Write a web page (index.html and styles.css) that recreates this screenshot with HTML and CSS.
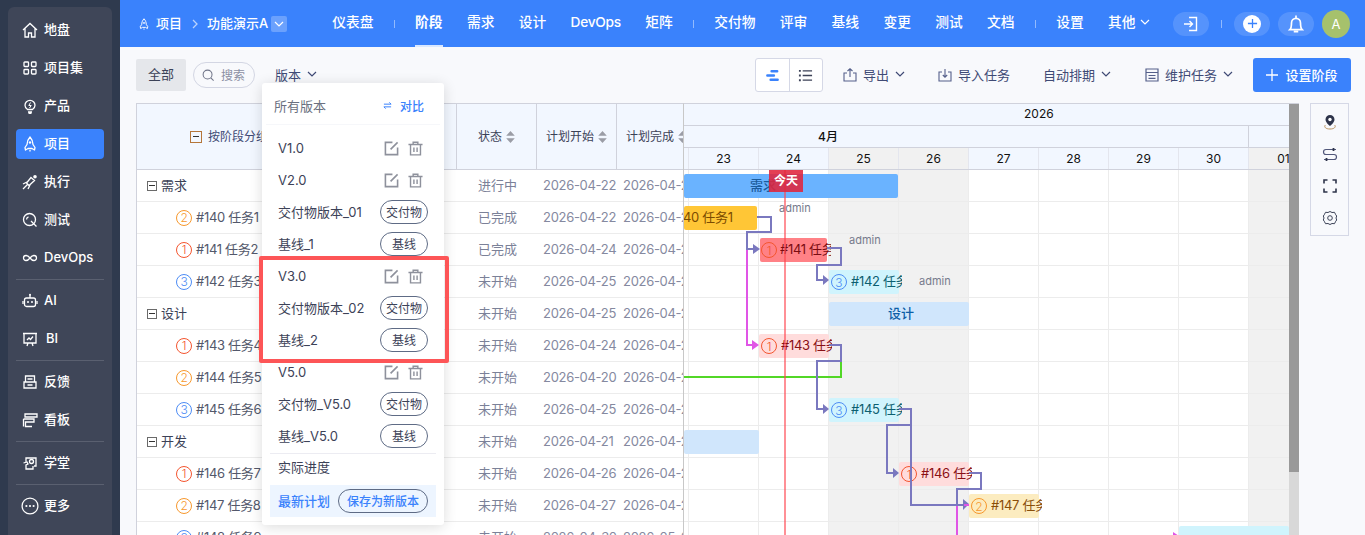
FILE: index.html
```html
<!DOCTYPE html>
<html>
<head>
    <meta charset="utf-8">
    <title>阶段</title>
    <link rel="stylesheet" href="styles.css">
</head>
<body>
    <svg class="defs" width="0" height="0">
        <symbol id="i-edit" viewBox="0 0 16 16"><path d="M9 1.500H1.500v13h13V7M7 9l7.500-7.500" fill="none" stroke="currentColor" stroke-width="1.700"/></symbol>
        <symbol id="i-trash" viewBox="0 0 16 16"><path d="M.500 3.800h15M5.500 3.800V1.300h5v2.500M2.700 3.800v11h10.600v-11M6.300 7v4.800M9.700 7v4.800" fill="none" stroke="currentColor" stroke-width="1.500"/></symbol>
        <symbol id="i-rocket" viewBox="0 0 16 16"><path d="M8 1C5.800 3.500 5 6 5 8.500l-2 3 .5 2.500 2.500-1.500h4l2.500 1.500.5-2.500-2-3C11 6 10.200 3.500 8 1zM8 14v1.500" fill="none" stroke="currentColor" stroke-width="1.300" stroke-linejoin="round"/><circle cx="8" cy="6.500" r="1.200" fill="currentColor"/></symbol>
        <symbol id="i-chev" viewBox="0 0 10 10"><path d="M1 3l4 4 4-4" fill="none" stroke="currentColor" stroke-width="1.200"/></symbol>
        <symbol id="i-sort" viewBox="0 0 10 14"><path d="M5 0l5 5.500H0zM5 14L0 8.500h10z" fill="currentColor"/></symbol>
    </svg>

    <div class="app">
        <aside class="sidebar">
            <nav class="side-panel">
                <a class="side-item"><svg class="side-ico" viewBox="0 0 16 16"><path d="M1 8l7-6.500L15 8M3 6.500V15h3.500v-4h3v4H13V6.500" fill="none" stroke="currentColor" stroke-width="1.300"/></svg>地盘</a>
                <a class="side-item"><svg class="side-ico" viewBox="0 0 16 16"><g fill="none" stroke="currentColor" stroke-width="1.300"><rect x="2" y="2" width="4.500" height="4.500" rx=".8"/><rect x="9.500" y="2" width="4.500" height="4.500" rx=".8"/><rect x="2" y="9.500" width="4.500" height="4.500" rx=".8"/><rect x="9.500" y="9.500" width="4.500" height="4.500" rx=".8"/></g></svg>项目集</a>
                <a class="side-item"><svg class="side-ico" viewBox="0 0 16 16"><path d="M5.500 11.500C3.500 10.300 3 8.700 3 7.300a5 5 0 0 1 10 0c0 1.400-.5 3-2.500 4.200zM6 14h4M6.500 15.500h3" fill="none" stroke="currentColor" stroke-width="1.300"/><path d="M8.500 4.500L6.800 7.500h2.400L7.500 10" fill="none" stroke="currentColor"/></svg>产品</a>
                <a class="side-item side-active"><svg class="side-ico"><use href="#i-rocket"/></svg>项目</a>
                <a class="side-item"><svg class="side-ico" viewBox="0 0 16 16"><path d="M9 3.500l3.500 3L7 11.500 4.500 9zM1 15l4.500-4.500M1 10l4-2M6 15l2-4" fill="none" stroke="currentColor" stroke-width="1.300"/><circle cx="13" cy="2.800" r="1.800" fill="currentColor"/></svg>执行</a>
                <a class="side-item"><svg class="side-ico" viewBox="0 0 16 16"><circle cx="7.500" cy="7.500" r="6" fill="none" stroke="currentColor" stroke-width="1.300"/><path d="M9 9l5.500 5.500M4.500 7.500a3 3 0 0 1 2-2.700" fill="none" stroke="currentColor" stroke-width="1.300"/></svg>测试</a>
                <a class="side-item side-latin"><svg class="side-ico" viewBox="0 0 16 16"><path d="M8 8C6.500 6 5.500 5.500 4 5.500a2.500 2.500 0 0 0 0 5c1.500 0 2.500-.5 4-2.500s2.500-2.500 4-2.500a2.500 2.500 0 0 1 0 5c-1.500 0-2.500-.5-4-2.500z" fill="none" stroke="currentColor" stroke-width="1.300"/></svg>DevOps</a>
                <div class="side-divider"></div>
                <a class="side-item side-latin"><svg class="side-ico" viewBox="0 0 16 16"><rect x="2.500" y="5" width="11" height="8.500" rx="2" fill="none" stroke="currentColor" stroke-width="1.300"/><path d="M8 2v3M1 8v3M15 8v3" stroke="currentColor" stroke-width="1.300"/><circle cx="8" cy="1.800" r="1" fill="currentColor"/><circle cx="6" cy="9" r="1" fill="currentColor"/><circle cx="10" cy="9" r="1" fill="currentColor"/></svg>AI</a>
                <a class="side-item side-latin"><svg class="side-ico" viewBox="0 0 16 16"><path d="M2 2.500h12V12H2zM1 2.500h14M6 12l-1 3M10 12l1 3M5 9l2-2 1.500 1.500L11 5.500" fill="none" stroke="currentColor" stroke-width="1.300"/></svg><span class="side-bi">BI</span></a>
                <div class="side-divider"></div>
                <a class="side-item"><svg class="side-ico" viewBox="0 0 16 16"><path d="M3.500 8V2h9v6M2 8h12v6H2zM5.500 5h5M5.500 11h5" fill="none" stroke="currentColor" stroke-width="1.300"/></svg>反馈</a>
                <a class="side-item"><svg class="side-ico" viewBox="0 0 16 16"><path d="M3 2h12v3H3zM1.500 7H12v3H3.500v4.500H10M3 2v3M1.500 7v7.500" fill="none" stroke="currentColor" stroke-width="1.300"/></svg>看板</a>
                <div class="side-divider"></div>
                <a class="side-item"><svg class="side-ico" viewBox="0 0 16 16"><path d="M4 7.500V3h10v8h-2M1.500 8l3.500-1 1 2-2 1v4h7v-3" fill="none" stroke="currentColor" stroke-width="1.300"/><circle cx="9.500" cy="6.500" r="2" fill="none" stroke="currentColor" stroke-width="1.300"/></svg>学堂</a>
                <div class="side-divider"></div>
                <a class="side-item"><svg class="side-ico side-ico-lg" viewBox="0 0 20 20"><circle cx="10" cy="10" r="8.800" fill="none" stroke="currentColor" stroke-width="1.400"/><circle cx="6" cy="10" r="1.200" fill="currentColor"/><circle cx="10" cy="10" r="1.200" fill="currentColor"/><circle cx="14" cy="10" r="1.200" fill="currentColor"/></svg>更多</a>
            </nav>
        </aside>

        <main class="main">
            <header class="topbar">
                <div class="crumbs">
                    <svg class="crumb-ico"><use href="#i-rocket"/></svg>
                    <span>项目</span>
                    <svg class="crumb-sep" viewBox="0 0 10 10"><path d="M3 1l4 4-4 4" fill="none" stroke="currentColor" stroke-width="1.300"/></svg>
                    <span>功能演示A</span>
                    <span class="crumb-drop"><svg class="chev"><use href="#i-chev"/></svg></span>
                </div>
                <nav class="top-nav">
                    <a>仪表盘</a>
                    <i class="nav-sep"></i>
                    <a class="nav-active">阶段</a>
                    <a>需求</a>
                    <a>设计</a>
                    <a class="nav-latin">DevOps</a>
                    <a>矩阵</a>
                    <i class="nav-sep"></i>
                    <a>交付物</a>
                    <a>评审</a>
                    <a>基线</a>
                    <a>变更</a>
                    <a>测试</a>
                    <a>文档</a>
                    <i class="nav-sep"></i>
                    <a>设置</a>
                    <a class="nav-more">其他<svg class="chev"><use href="#i-chev"/></svg></a>
                </nav>
                <div class="top-actions">
                    <span class="top-btn"><svg viewBox="0 0 16 16"><path d="M6 1.500h7.500v13H6M1 8h8M6.500 5l3 3-3 3" fill="none" stroke="currentColor" stroke-width="1.400"/></svg></span>
                    <i class="nav-sep"></i>
                    <span class="top-btn top-btn-add"><span class="add-circle"><svg viewBox="0 0 12 12"><path d="M6 1v10M1 6h10" stroke="#3a82fc" stroke-width="1.400"/></svg></span></span>
                    <span class="top-btn top-btn-bell"><svg viewBox="0 0 16 16"><path d="M2.500 13c1-1 1.500-2 1.500-6a4 4 0 0 1 8 0c0 4 .5 5 1.500 6zM6 14.800h4M8 .5v2.500" fill="none" stroke="currentColor" stroke-width="1.500"/></svg></span>
                    <span class="avatar">A</span>
                </div>
            </header>

            <section class="toolbar">
                <button class="tab-all">全部</button>
                <span class="search"><svg viewBox="0 0 14 14"><circle cx="6" cy="6" r="4.800" fill="none" stroke="currentColor" stroke-width="1.100"/><path d="M9.500 9.500l3 3" stroke="currentColor" stroke-width="1.100"/></svg>搜索</span>
                <span class="version-btn">版本<svg class="chev"><use href="#i-chev"/></svg></span>
                <div class="tool-right">
                    <div class="view-switch">
                        <span><svg viewBox="0 0 16 16"><g fill="none" stroke="#3a82fc" stroke-width="2.600" stroke-linecap="round"><path d="M7 3.500h6M2.500 8h7M6 12.500h7.500"/></g></svg></span>
                        <span><svg viewBox="0 0 16 16"><g stroke="#3c4257" stroke-width="1.400"><path d="M5 3h10M5 8h10M5 13h10"/><path d="M1 3h2M1 8h2M1 13h2" stroke-width="2"/></g></svg></span>
                    </div>
                    <span class="tool-item tool-export"><svg class="tool-ico" viewBox="0 0 14 14"><path d="M4 5H1v8h12V5h-3M7 9V1M4.500 3L7 .8 9.500 3" fill="none" stroke="currentColor" stroke-width="1.100"/></svg>导出<svg class="chev"><use href="#i-chev"/></svg></span>
                    <span class="tool-item tool-import"><svg class="tool-ico" viewBox="0 0 14 14"><path d="M4 4H1v9h12V4h-3M7 1v8M4.800 7L7 9.200 9.200 7" fill="none" stroke="currentColor" stroke-width="1.100"/></svg>导入任务</span>
                    <span class="tool-item tool-auto">自动排期<svg class="chev"><use href="#i-chev"/></svg></span>
                    <span class="tool-item tool-maint"><svg class="tool-ico" viewBox="0 0 14 14"><path d="M1 1h12v12H1zM1 4.500h12M3.500 7.500h7M3.500 10.300h7" fill="none" stroke="currentColor" stroke-width="1.200"/></svg>维护任务<svg class="chev"><use href="#i-chev"/></svg></span>
                    <button class="primary-btn"><svg viewBox="0 0 12 12"><path d="M6 0v12M0 6h12" stroke="#fff" stroke-width="1.300"/></svg>设置阶段</button>
                </div>
            </section>

            <section class="board">
                <div class="task-table">
                    <div class="thead">
                        <div class="th th-name"><span class="collapse collapse-head"></span>按阶段分组</div>
                        <div class="th">状态<svg class="sort"><use href="#i-sort"/></svg></div>
                        <div class="th">计划开始<svg class="sort"><use href="#i-sort"/></svg></div>
                        <div class="th th-last">计划完成<svg class="sort"><use href="#i-sort"/></svg></div>
                    </div>
                    <div class="tr"><div class="td-name"><span class="collapse"></span>需求</div><div class="td-status">进行中</div><div class="td-date">2026-04-22</div><div class="td-date">2026-04-24</div></div>
                    <div class="tr"><div class="td-name td-task"><span class="level level-2">2</span>#140 任务1</div><div class="td-status">已完成</div><div class="td-date">2026-04-22</div><div class="td-date">2026-04-23</div></div>
                    <div class="tr"><div class="td-name td-task"><span class="level level-1">1</span>#141 任务2</div><div class="td-status">已完成</div><div class="td-date">2026-04-24</div><div class="td-date">2026-04-24</div></div>
                    <div class="tr"><div class="td-name td-task"><span class="level level-3">3</span>#142 任务3</div><div class="td-status">未开始</div><div class="td-date">2026-04-25</div><div class="td-date">2026-04-25</div></div>
                    <div class="tr"><div class="td-name"><span class="collapse"></span>设计</div><div class="td-status">未开始</div><div class="td-date">2026-04-25</div><div class="td-date">2026-04-26</div></div>
                    <div class="tr"><div class="td-name td-task"><span class="level level-1">1</span>#143 任务4</div><div class="td-status">未开始</div><div class="td-date">2026-04-24</div><div class="td-date">2026-04-24</div></div>
                    <div class="tr"><div class="td-name td-task"><span class="level level-2">2</span>#144 任务5</div><div class="td-status">未开始</div><div class="td-date">2026-04-20</div><div class="td-date">2026-04-21</div></div>
                    <div class="tr"><div class="td-name td-task"><span class="level level-3">3</span>#145 任务6</div><div class="td-status">未开始</div><div class="td-date">2026-04-25</div><div class="td-date">2026-04-25</div></div>
                    <div class="tr"><div class="td-name"><span class="collapse"></span>开发</div><div class="td-status">未开始</div><div class="td-date">2026-04-21</div><div class="td-date">2026-04-23</div></div>
                    <div class="tr"><div class="td-name td-task"><span class="level level-1">1</span>#146 任务7</div><div class="td-status">未开始</div><div class="td-date">2026-04-26</div><div class="td-date">2026-04-26</div></div>
                    <div class="tr"><div class="td-name td-task"><span class="level level-2">2</span>#147 任务8</div><div class="td-status">未开始</div><div class="td-date">2026-04-27</div><div class="td-date">2026-04-27</div></div>
                    <div class="tr"><div class="td-name td-task"><span class="level level-3">3</span>#148 任务9</div><div class="td-status">未开始</div><div class="td-date">2026-04-30</div><div class="td-date">2026-05-01</div></div>
                </div>

                <div class="gantt">
                    <div class="gantt-inner">
                        <div class="g-year">2026</div>
                        <div class="g-month"><span class="g-month-apr">4月</span><span class="g-month-may"></span></div>
                        <div class="g-days">
                            <span class="g-day g-day-first"></span>
                            <span class="g-day">23</span>
                            <span class="g-day">24</span>
                            <span class="g-day g-off">25</span>
                            <span class="g-day g-off">26</span>
                            <span class="g-day">27</span>
                            <span class="g-day">28</span>
                            <span class="g-day">29</span>
                            <span class="g-day">30</span>
                            <span class="g-day g-off">01</span>
                        </div>
                        <div class="g-body">
                            <div class="g-cols">
                                <span class="g-col g-col-first"></span>
                                <span class="g-col"></span>
                                <span class="g-col"></span>
                                <span class="g-col g-off"></span>
                                <span class="g-col g-off"></span>
                                <span class="g-col"></span>
                                <span class="g-col"></span>
                                <span class="g-col"></span>
                                <span class="g-col"></span>
                                <span class="g-col g-off"></span>
                            </div>

                            <div class="bar bar-req">需求</div>
                            <div class="bar bar-t140">40 任务1</div>
                            <div class="bar-task bar-t141 task-hot"><span class="level level-1">1</span><span class="task-text">#141 任务2</span></div>
                            <div class="bar-task bar-t142 task-low"><span class="level level-3">3</span><span class="task-text">#142 任务3</span></div>
                            <div class="bar bar-design">设计</div>
                            <div class="bar-task bar-t143 task-high"><span class="level level-1">1</span><span class="task-text">#143 任务4</span></div>
                            <div class="bar-task bar-t145 task-low"><span class="level level-3">3</span><span class="task-text">#145 任务6</span></div>
                            <div class="bar bar-dev"></div>
                            <div class="bar-task bar-t146 task-high"><span class="level level-1">1</span><span class="task-text">#146 任务7</span></div>
                            <div class="bar-task bar-t147 task-mid"><span class="level level-2">2</span><span class="task-text">#147 任务8</span></div>
                            <div class="bar bar-t148"></div>

                            <span class="owner owner-1">admin</span>
                            <span class="owner owner-2">admin</span>
                            <span class="owner owner-3">admin</span>

                            <svg class="links" viewBox="684 170 605 365">
                                <g fill="none" stroke-width="2">
                                    <path d="M747 250V345H754" stroke="#e055e6"/>
                                    <path d="M957 505V540M957 505H964" stroke="#e055e6"/>
                                    <path d="M841 361V377H680" stroke="#52d726"/>
                                    <path d="M757 217H771V232H747V249H754" stroke="#7a78bf"/>
                                    <path d="M827 248H841V265H817V280H824" stroke="#7a78bf"/>
                                    <path d="M829 345H841V361H817V409H824" stroke="#7a78bf"/>
                                    <path d="M899 409H911V505H964" stroke="#7a78bf"/>
                                    <path d="M911 425H887V473H894" stroke="#7a78bf"/>
                                    <path d="M969 473H981V489H957V505" stroke="#7a78bf"/>
                                </g>
                                <g fill="#7a78bf">
                                    <path d="M753 244l7 5-7 5z"/>
                                    <path d="M823 275l6 5-6 5z"/>
                                    <path d="M823 404l6 5-6 5z"/>
                                    <path d="M893 468l6 5-6 5z"/>
                                    <path d="M963 499l6 5-6 6z"/>
                                </g>
                                <g fill="#e055e6">
                                    <path d="M752 340l7 5-7 5z"/>
                                    <path d="M1173 532l6 4-6 4z"/>
                                </g>
                                <path d="M964 505H969" stroke="#e055e6" stroke-width="2"/>
                            </svg>

                            <span class="today-line"></span>
                            <span class="today-tag">今天</span>
                        </div>
                    </div>
                    <div class="scrollbar"><span class="scroll-thumb"></span></div>
                </div>

                <div class="side-tools">
                    <svg viewBox="0 0 16 16"><path d="M8 1a4.500 4.500 0 0 0-4.500 4.500C3.500 8.500 8 12 8 12s4.500-3.500 4.500-6.500A4.500 4.500 0 0 0 8 1z" fill="#2e344a"/><circle cx="8" cy="5.500" r="1.700" fill="#fff"/><path d="M3.500 11C2 12 2.500 15 8 15s6-3 4.500-4" fill="none" stroke="#b9915c" stroke-width="1"/></svg>
                    <svg viewBox="0 0 16 16"><path d="M14 3.500H4a2.500 2.500 0 0 0 0 5h8a2.500 2.500 0 0 1 0 5H2" fill="none" stroke="#51577a" stroke-width="1.200"/><path d="M11.500 2v3M4.500 12v3" stroke="#2e344a" stroke-width="1.800"/></svg>
                    <svg viewBox="0 0 16 16"><path d="M2 5.500V2h3.500M10.500 2H14v3.500M14 10.500V14h-3.500M5.500 14H2v-3.500" fill="none" stroke="#2e344a" stroke-width="1.600"/></svg>
                    <svg viewBox="0 0 16 16"><path d="M8 1.500l2 1 2.500-.2 1.200 2.400 1 1.300-.7 2 .7 2-1 1.300-1.200 2.400-2.500-.2-2 1-2-1-2.500.2-1.200-2.400-1-1.300.7-2-.7-2 1-1.300 1.200-2.400 2.500.2z" fill="none" stroke="#3c4257"/><circle cx="8" cy="8" r="2.300" fill="none" stroke="#3c4257"/></svg>
                </div>
            </section>
        </main>

        <div class="version-menu">
            <div class="vm-head"><span>所有版本</span><span class="vm-compare"><svg viewBox="0 0 10 10"><path d="M1 3.500h8L7 1.500M9 6.500H1l2 2" fill="none" stroke="currentColor" stroke-width="1.100"/></svg>对比</span></div>
            <div class="vm-item vm-latin">V1.0<span class="vm-tools"><svg><use href="#i-edit"/></svg><svg><use href="#i-trash"/></svg></span></div>
            <div class="vm-item vm-latin">V2.0<span class="vm-tools"><svg><use href="#i-edit"/></svg><svg><use href="#i-trash"/></svg></span></div>
            <div class="vm-item">交付物版本_01<span class="vm-pill">交付物</span></div>
            <div class="vm-item">基线_1<span class="vm-pill">基线</span></div>
            <div class="vm-item vm-latin">V3.0<span class="vm-tools"><svg><use href="#i-edit"/></svg><svg><use href="#i-trash"/></svg></span></div>
            <div class="vm-item">交付物版本_02<span class="vm-pill">交付物</span></div>
            <div class="vm-item">基线_2<span class="vm-pill">基线</span></div>
            <div class="vm-item vm-latin">V5.0<span class="vm-tools"><svg><use href="#i-edit"/></svg><svg><use href="#i-trash"/></svg></span></div>
            <div class="vm-item">交付物_V5.0<span class="vm-pill">交付物</span></div>
            <div class="vm-item">基线_V5.0<span class="vm-pill">基线</span></div>
            <div class="vm-actual">实际进度</div>
            <div class="vm-latest"><span>最新计划</span><span class="vm-save">保存为新版本</span></div>
            <div class="vm-mark"></div>
        </div>
    </div>
</body>
</html>
```

FILE: styles.css
```css
* {
    margin: 0;
    padding: 0;
    box-sizing: border-box;
}

body {
    width: 1365px;
    height: 535px;
    overflow: hidden;
    font-family: Inter, "Noto Sans CJK SC", sans-serif;
    font-size: 14px;
    background: #f8f9fc;
    color: #3c4257;
}

button {
    font: inherit;
    border: none;
}

.defs {
    position: absolute;
}

.app {
    position: relative;
    display: flex;
    height: 535px;
}

.chev {
    width: 10px;
    height: 10px;
}

/* sidebar */
.sidebar {
    width: 120px;
    flex: none;
    background: #2f3a4e;
    padding: 7px 8px 0;
}

.side-panel {
    height: 528px;
    background: #3f4658;
    border-radius: 6px 6px 0 0;
    padding: 8px 8px 0;
    display: flex;
    flex-direction: column;
    gap: 8px;
}

.side-item {
    height: 30px;
    flex: none;
    display: flex;
    align-items: center;
    gap: 6px;
    padding: 0 0 4px 6px;
    border-radius: 4px;
    color: #fff;
    font-size: 13px;
    font-weight: 500;
}

.side-latin {
    padding-bottom: 2px;
}

.side-latin .side-ico {
    margin-top: 2px;
}

.side-active {
    background: #3a82fc;
}

.side-ico {
    width: 16px;
    height: 16px;
    flex: none;
    margin-top: 4px;
}

.side-ico-lg {
    width: 18px;
    height: 18px;
    margin: 4px -1px 0 -1px;
}

.side-bi {
    padding-left: 2px;
}

.side-divider {
    height: 1px;
    flex: none;
    background: #5a6070;
    margin: -2px 0;
}

/* top bar */
.main {
    flex: 1;
    min-width: 0;
    display: flex;
    flex-direction: column;
}

.topbar {
    height: 47px;
    flex: none;
    display: flex;
    align-items: center;
    padding: 0 15px 0 18px;
    background: #3a82fc;
    color: #fff;
    font-weight: 500;
}

.crumbs {
    display: flex;
    align-items: center;
    font-size: 13px;
    padding-bottom: 2px;
}

.crumb-ico {
    width: 12px;
    height: 14px;
    margin: 2px 6px 0 0;
}

.crumb-sep {
    width: 10px;
    height: 10px;
    margin: 2px 7px 0 8px;
    opacity: .65;
}

.crumb-drop {
    width: 16px;
    height: 16px;
    margin: 2px 0 0 3px;
    display: flex;
    align-items: center;
    justify-content: center;
    background: rgba(255, 255, 255, .25);
    border-radius: 2px;
}

.top-nav {
    display: flex;
    align-items: center;
    gap: 24.300px;
    margin-left: 45px;
    height: 47px;
    font-size: 13.750px;
}

.top-nav a {
    height: 47px;
    line-height: 44px;
    position: relative;
}

.nav-latin {
    letter-spacing: -.3px;
}

.nav-active {
    font-weight: 700;
}

.nav-active::after {
    content: '';
    position: absolute;
    left: 0;
    right: 0;
    bottom: 0;
    height: 2px;
    background: #d9e8ff;
}

.nav-more .chev {
    margin-left: 5px;
}

.nav-sep {
    width: 1px;
    height: 8px;
    margin: 0 -4px;
    background: rgba(255, 255, 255, .45);
}

.top-actions {
    display: flex;
    align-items: center;
    margin-left: auto;
    gap: 8px;
}

.top-actions .nav-sep {
    margin: 0 4px;
}

.top-btn {
    width: 36px;
    height: 24px;
    display: flex;
    align-items: center;
    justify-content: center;
    border-radius: 12px;
    background: rgba(255, 255, 255, .14);
}

.top-btn svg {
    width: 16px;
    height: 16px;
}

.top-btn-bell svg {
    width: 18px;
    height: 18px;
}

.add-circle {
    width: 18px;
    height: 18px;
    border-radius: 50%;
    background: #fff;
    display: flex;
    align-items: center;
    justify-content: center;
}

.add-circle svg {
    width: 11px;
    height: 11px;
}

.avatar {
    width: 28px;
    height: 28px;
    border-radius: 50%;
    background: #a6c16c;
    display: flex;
    align-items: center;
    justify-content: center;
    font-size: 13px;
    font-weight: 400;
}

/* toolbar */
.toolbar {
    height: 56px;
    flex: none;
    display: flex;
    align-items: center;
    padding: 0 14px 0 16px;
    font-size: 13px;
    color: #3f4a75;
}

.tab-all {
    width: 50px;
    height: 32px;
    padding-bottom: 3px;
    background: #e5e7eb;
    border-radius: 2px;
    color: #3c4257;
    font-size: 13px;
}

.search {
    width: 62px;
    height: 26px;
    margin-left: 7px;
    border: 1px solid #d3d6e3;
    border-radius: 13px;
    display: flex;
    align-items: center;
    gap: 6px;
    padding: 0 0 2px 8px;
    color: #8b8fa3;
    font-size: 12px;
}

.search svg {
    width: 13px;
    height: 13px;
    margin-top: 2px;
    color: #6f7488;
    flex: none;
}

.version-btn {
    margin-left: 20px;
    display: flex;
    align-items: center;
    gap: 6px;
    padding-bottom: 2px;
}

.tool-right {
    margin-left: auto;
    display: flex;
    align-items: center;
    color: #3f4a75;
}

.view-switch {
    display: flex;
    height: 34px;
    border: 1px solid #d5d8e6;
    border-radius: 3px;
    background: #fff;
}

.view-switch span {
    width: 33px;
    display: flex;
    align-items: center;
    justify-content: center;
}

.view-switch span + span {
    border-left: 1px solid #d5d8e6;
}

.view-switch svg {
    width: 15px;
    height: 15px;
}

.tool-item {
    display: flex;
    align-items: center;
    margin-left: 32px;
    padding-bottom: 2px;
}

.tool-export {
    margin-left: 20px;
}

.tool-import {
    margin-left: 33px;
}

.tool-auto {
    margin-left: 33px;
}

.tool-maint {
    margin-left: 34px;
}

.tool-ico {
    width: 14px;
    height: 14px;
    margin: 2px 6px 0 0;
    color: #55608a;
}

.tool-item .chev {
    margin-left: 6px;
}

.primary-btn {
    width: 98px;
    height: 34px;
    margin-left: 20px;
    padding-bottom: 2px;
    background: #3a82fc;
    border-radius: 3px;
    color: #fff;
    font-size: 13px;
    font-weight: 500;
    display: flex;
    align-items: center;
    justify-content: center;
    gap: 7px;
}

.primary-btn svg {
    width: 12px;
    height: 12px;
    margin-top: 2px;
}

/* board */
.board {
    flex: 1;
    min-height: 0;
    display: flex;
    align-items: flex-start;
    padding-left: 16px;
}

.task-table {
    width: 547px;
    flex: none;
    border-left: 1px solid #d0d2dc;
    border-top: 1px solid #d0d2dc;
    background: #fff;
    font-size: 13px;
}

.thead,
.tr {
    display: grid;
    grid-template-columns: 320px 80px 80px 66px;
}

.thead {
    height: 66px;
    background: #f2f7ff;
    border-bottom: 1px solid #d0d2dc;
}

.th {
    display: flex;
    align-items: center;
    justify-content: center;
    gap: 4px;
    padding-bottom: 2px;
    border-right: 1px solid #d0d2dc;
    font-size: 12px;
    color: #3c4257;
    white-space: nowrap;
    overflow: hidden;
}

.th-name {
    justify-content: flex-start;
    padding-left: 53px;
    gap: 6px;
    color: #3f4a75;
}

.th-last {
    border-right: none;
    justify-content: flex-start;
    padding-left: 9px;
}

.sort {
    width: 9px;
    height: 12px;
    margin-top: 2px;
    color: #9b9da6;
    flex: none;
}

.tr {
    height: 32px;
    border-bottom: 1px solid #ececec;
    align-items: center;
    letter-spacing: -.3px;
}

.td-name {
    display: flex;
    align-items: center;
    padding: 0 0 2px 10px;
    gap: 4px;
    color: #3c4257;
    letter-spacing: 0;
}

.td-task {
    padding-left: 39px;
    color: #53586b;
    letter-spacing: -.3px;
}

.td-status {
    padding: 0 0 2px 21px;
    color: #7b8198;
    letter-spacing: 0;
}

.td-date {
    padding: 0 0 2px 6px;
    color: #8589a0;
    white-space: nowrap;
    overflow: hidden;
}

.collapse {
    width: 10px;
    height: 10px;
    border: 1px solid #6a6a6a;
    position: relative;
    flex: none;
    margin-top: 2px;
}

.collapse::after {
    content: '';
    position: absolute;
    left: 1px;
    right: 1px;
    top: 3px;
    height: 1px;
    background: #333;
}

.collapse-head {
    width: 12px;
    height: 12px;
    border-color: #b5763a;
}

.collapse-head::after {
    top: 4px;
    left: 2px;
    right: 2px;
}

.level {
    width: 16px;
    height: 16px;
    flex: none;
    border: 1px solid currentColor;
    border-radius: 50%;
    display: flex;
    align-items: center;
    justify-content: center;
    font-size: 12px;
    font-weight: 300;
    background: transparent;
}

.td-task .level {
    margin-top: 2px;
}

.level-1 {
    color: #f4552f;
}

.level-2 {
    color: #f7982d;
}

.level-3 {
    color: #4d8cf5;
}

/* gantt */
.gantt {
    width: 616px;
    height: 432px;
    flex: none;
    display: flex;
    border-top: 1px solid #d0d2dc;
    border-left: 1px solid #c8c8c8;
    font-size: 12px;
    color: #111;
}

.gantt-inner {
    width: 605px;
    flex: none;
    display: flex;
    flex-direction: column;
    overflow: hidden;
}

.g-year,
.g-month,
.g-days {
    height: 22px;
    flex: none;
    background: #f2f7ff;
    border-bottom: 1px solid #d0d2dc;
}

.g-year {
    line-height: 19px;
    padding-left: 340px;
}

.g-month {
    display: flex;
    line-height: 21px;
    font-weight: 500;
}

.g-month-apr {
    width: 565px;
    padding-left: 134px;
    border-right: 1px solid #d0d2dc;
}

.g-days {
    display: flex;
}

.g-day {
    width: 70px;
    flex: none;
    text-align: center;
    line-height: 21px;
    border-right: 1px solid #e4e6ee;
}

.g-day-first {
    width: 5px;
}

.g-off {
    background: #f1f1f1;
}

.g-body {
    position: relative;
    flex: 1;
    background: #fff;
    font-size: 13px;
}

.g-cols {
    position: absolute;
    inset: 0;
    display: flex;
}

.g-col {
    width: 70px;
    flex: none;
    border-right: 1px solid #ececec;
}

.g-col-first {
    width: 5px;
}

.g-body::after {
    content: '';
    position: absolute;
    inset: 0;
    background: repeating-linear-gradient(to bottom, transparent 0, transparent 31px, #ececec 31px, #ececec 32px);
}

.bar,
.bar-task {
    position: absolute;
    height: 24px;
    z-index: 1;
    border-radius: 2px;
    white-space: nowrap;
}

.bar {
    line-height: 23px;
    text-align: center;
    overflow: hidden;
}

.bar-req {
    left: 0;
    top: 4px;
    width: 214px;
    padding-right: 56px;
    background: #6ab3ff;
    color: #1c5c9c;
    font-weight: 500;
}

.bar-t140 {
    left: 0;
    top: 36px;
    width: 73px;
    background: #ffc636;
    color: #7b4b00;
    text-align: left;
    text-indent: -1px;
    letter-spacing: -.3px;
}

.bar-design {
    left: 145px;
    top: 132px;
    width: 140px;
    background: #d0e6fc;
    color: #0e5ea6;
    font-weight: 500;
    padding-left: 4px;
}

.bar-dev {
    left: 0;
    top: 260px;
    width: 75px;
    background: #d0e6fc;
}

.bar-t148 {
    left: 495px;
    top: 356px;
    width: 110px;
    background: #d0f4fd;
}

.bar-task {
    width: 70px;
    display: flex;
    align-items: center;
    padding-left: 2px;
    gap: 4px;
}

.task-text {
    width: 51px;
    flex: none;
    overflow: hidden;
    letter-spacing: -.3px;
    padding-bottom: 3px;
}

.bar-t141 {
    left: 76px;
    top: 68px;
    width: 67px;
    padding-left: 1px;
    gap: 3px;
}

.bar-t142 {
    left: 145px;
    top: 100px;
}

.bar-t143 {
    left: 75px;
    top: 164px;
}

.bar-t145 {
    left: 145px;
    top: 228px;
}

.bar-t146 {
    left: 215px;
    top: 292px;
}

.bar-t147 {
    left: 285px;
    top: 324px;
}

.task-hot {
    background: #ff8186;
    color: #7a0c12;
}

.task-high {
    background: #ffdcdc;
    color: #8a1015;
}

.task-mid {
    background: #fcecc0;
    color: #8a4e08;
}

.task-low {
    background: #d0f4fd;
    color: #0c5f70;
}

.owner {
    position: absolute;
    z-index: 1;
    font-size: 11px;
    color: #777b8c;
}

.owner-1 {
    left: 95px;
    top: 31px;
}

.owner-2 {
    left: 165px;
    top: 63px;
}

.owner-3 {
    left: 235px;
    top: 104px;
}

.links {
    position: absolute;
    left: 0;
    top: 0;
    width: 605px;
    height: 365px;
    z-index: 2;
    overflow: hidden;
}

.today-line {
    position: absolute;
    left: 100px;
    top: 0;
    bottom: 0;
    width: 2px;
    background: rgba(255, 70, 80, .6);
    z-index: 3;
}

.today-tag {
    position: absolute;
    left: 85px;
    top: 0;
    width: 34px;
    height: 22px;
    background: rgba(224, 36, 60, .88);
    color: #fff;
    font-size: 12px;
    font-weight: 600;
    text-align: center;
    line-height: 21px;
    z-index: 4;
}

.scrollbar {
    width: 10px;
    flex: none;
    background: #d8d8d8;
}

.scroll-thumb {
    display: block;
    height: 368px;
    background: #999;
}

.side-tools {
    width: 39px;
    height: 133px;
    flex: none;
    margin-left: 11px;
    border: 1px solid #d5d8e6;
    display: flex;
    flex-direction: column;
    align-items: center;
    gap: 16px;
    padding-top: 10px;
}

.side-tools svg {
    width: 16px;
    height: 16px;
    flex: none;
}

/* version dropdown */
.version-menu {
    position: absolute;
    left: 262px;
    top: 83px;
    width: 182px;
    height: 442px;
    background: #fff;
    border-radius: 3px;
    box-shadow: 0 2px 14px rgba(0, 0, 0, .14);
    z-index: 10;
    padding: 0 8px;
    font-size: 13px;
    color: #3c4257;
}

.vm-head {
    height: 42px;
    margin: 0 -4px 7px;
    padding: 3px 16px 0 8px;
    display: flex;
    align-items: center;
    justify-content: space-between;
    color: #6b7080;
    border-bottom: 1px solid #f6f7fa;
}

.vm-compare {
    display: flex;
    align-items: center;
    gap: 8px;
    color: #3a82fc;
    font-size: 12px;
    font-weight: 500;
}

.vm-compare svg {
    width: 9px;
    height: 9px;
}

.vm-item {
    height: 32px;
    display: flex;
    align-items: center;
    justify-content: space-between;
    padding: 0 8px 2px;
    white-space: nowrap;
}

.vm-latin {
    padding-bottom: 0;
}

.vm-tools {
    display: flex;
    gap: 9px;
    padding: 0 5px 0 0;
    color: #8e919c;
}

.vm-tools svg {
    width: 15px;
    height: 15px;
}

.vm-pill {
    width: 48px;
    height: 24px;
    margin-top: 2px;
    padding-bottom: 2px;
    border: 1px solid #5e6b85;
    border-radius: 12px;
    display: flex;
    align-items: center;
    justify-content: center;
    font-size: 12px;
}

.vm-actual {
    height: 27px;
    margin-top: 1px;
    padding: 0 0 2px 8px;
    border-top: 1px solid #ececf2;
    display: flex;
    align-items: center;
}

.vm-latest {
    height: 32px;
    margin-top: 5px;
    padding: 0 8px 2px;
    display: flex;
    align-items: center;
    justify-content: space-between;
    background: #edf5ff;
    color: #3a82fc;
    font-weight: 500;
}

.vm-save {
    width: 90px;
    height: 24px;
    margin-top: 2px;
    padding-bottom: 2px;
    border: 1px solid #5e6b85;
    border-radius: 12px;
    display: flex;
    align-items: center;
    justify-content: center;
    font-size: 12px;
}

.vm-mark {
    position: absolute;
    left: -3px;
    top: 173px;
    width: 190px;
    height: 107px;
    border: 4px solid #fd5557;
    border-radius: 2px;
    pointer-events: none;
}
```
